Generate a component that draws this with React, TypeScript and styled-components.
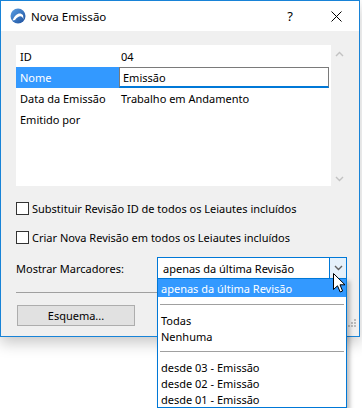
import React from 'react';
import styled, { createGlobalStyle } from 'styled-components';

const GlobalStyle = createGlobalStyle`
  html, body {
    margin: 0;
    padding: 0;
    background: #ffffff;
  }
  body {
    font-family: 'Noto Sans', 'Segoe UI', sans-serif;
    font-size: 11px;
    color: #000;
  }
  * { box-sizing: border-box; }
`;

const Stage = styled.div`
  position: relative;
  width: 362px;
  height: 408px;
  overflow: hidden;
`;

const Window = styled.div`
  width: 360px;
  border: 1px solid #1883d7;
  background: #f0f0f0;
  box-shadow: 0 6px 14px rgba(0, 0, 0, 0.22);
  display: flex;
  flex-direction: column;
`;

const TitleBar = styled.div`
  height: 30px;
  background: #fff;
  display: flex;
  align-items: center;
  padding-left: 9px;
`;

const TitleText = styled.span`
  margin-left: 5px;
  font-size: 11.5px;
  flex: 1;
`;

const TitleButton = styled.div<{ $w: number }>`
  width: ${p => p.$w}px;
  height: 30px;
  display: flex;
  align-items: center;
  justify-content: center;
  font-size: 13px;
`;

const Body = styled.div`
  padding: 14px 12px 10px 15px;
  display: flex;
  flex-direction: column;
`;

const ListPanel = styled.div`
  height: 141px;
  display: flex;
`;

const ListArea = styled.div`
  flex: 1;
  background: #fff;
  padding-top: 1px;
`;

const ScrollBar = styled.div`
  width: 16px;
  display: flex;
  flex-direction: column;
  justify-content: space-between;
  align-items: center;
  padding: 6px 0 4px;
`;

const Row = styled.div`
  height: 21px;
  display: flex;
  align-items: stretch;
`;

const Label = styled.div<{ $selected?: boolean }>`
  width: 103px;
  padding-left: 4px;
  display: flex;
  align-items: center;
  background: ${p => (p.$selected ? '#3399ff' : 'transparent')};
  color: ${p => (p.$selected ? '#fff' : '#000')};
`;

const Value = styled.div`
  flex: 1;
  padding-left: 2px;
  display: flex;
  align-items: center;
`;

const EditField = styled.div`
  flex: 1;
  margin-right: 2px;
  border: 1px solid #7a7a7a;
  border-bottom: 2px solid #0078d7;
  padding-left: 3px;
  display: flex;
  align-items: center;
  background: #fff;
`;

const CheckRow = styled.label<{ $top: number }>`
  display: flex;
  align-items: center;
  margin-top: ${p => p.$top}px;
  height: 14px;
`;

const Box = styled.span`
  width: 13px;
  height: 13px;
  border: 1px solid #333;
  background: #fff;
  margin-right: 3px;
`;

const ComboRow = styled.div`
  margin-top: 13px;
  display: flex;
  align-items: center;
  justify-content: space-between;
`;

const Combo = styled.div`
  position: relative;
  width: 190px;
  height: 22px;
  border: 1px solid #0078d7;
  background: #fff;
  display: flex;
`;

const ComboText = styled.div`
  flex: 1;
  padding-left: 5px;
  display: flex;
  align-items: center;
`;

const ComboArrow = styled.div`
  width: 17px;
  background: #e5f1fb;
  border-left: 1px solid #0078d7;
  display: flex;
  align-items: center;
  justify-content: center;
`;

const DropList = styled.div`
  position: absolute;
  left: -1px;
  top: 20px;
  width: 190px;
  background: #fff;
  border: 1px solid #0078d7;
  box-shadow: 3px 3px 4px rgba(0, 0, 0, 0.25);
  z-index: 5;
`;

const DropItem = styled.div<{ $selected?: boolean; $h: number }>`
  height: ${p => p.$h}px;
  padding-left: 3px;
  display: flex;
  align-items: center;
  background: ${p => (p.$selected ? '#3399ff' : 'transparent')};
  color: ${p => (p.$selected ? '#fff' : '#000')};
`;

const DropSep = styled.div`
  height: 15px;
  display: flex;
  align-items: center;
  padding: 0 2px;
  &::after {
    content: '';
    flex: 1;
    height: 1px;
    background: #a0a0a0;
  }
`;

const Separator = styled.div`
  margin-top: 13px;
  height: 1px;
  background: #a0a0a0;
`;

const PushButton = styled.button`
  margin-top: 12px;
  margin-left: 1px;
  width: 118px;
  height: 21px;
  border: 1px solid #adadad;
  background: #e1e1e1;
  font-family: inherit;
  font-size: 11px;
  padding: 0;
  color: #000;
`;

const Grip = styled.div`
  align-self: flex-end;
  margin-top: -10px;
  margin-right: -10px;
  height: 10px;
  width: 10px;
`;

const Cursor = styled.svg`
  position: absolute;
  left: 333px;
  top: 273px;
  z-index: 10;
`;

const AppIcon = () => (
  <svg width="16" height="16" viewBox="0 0 16 16">
    <defs>
      <linearGradient id="ag" x1="0" y1="0" x2="1" y2="1">
        <stop offset="0" stopColor="#5aa0e6" />
        <stop offset="1" stopColor="#1d4f9c" />
      </linearGradient>
    </defs>
    <circle cx="8" cy="8" r="7.5" fill="url(#ag)" />
    <path d="M2.5 12.5 C5 6 10 3.5 13 7 L13.6 11.5 C12.5 7.5 9 6.5 5 12 Z" fill="#fff" />
  </svg>
);

const Chevron = ({ up, color }: { up?: boolean; color: string }) => (
  <svg width="9" height="6" viewBox="0 0 9 6">
    <path d={up ? 'M1 5 L4.5 1.5 L8 5' : 'M1 1 L4.5 4.5 L8 1'} stroke={color} strokeWidth="1.4" fill="none" />
  </svg>
);

export default function App() {
  return (
    <Stage>
      <GlobalStyle />
      <Window>
        <TitleBar>
          <AppIcon />
          <TitleText>Nova Emissão</TitleText>
          <TitleButton $w={46}>?</TitleButton>
          <TitleButton $w={46}>
            <svg width="11" height="11" viewBox="0 0 11 11">
              <path d="M0.5 0.5 L10.5 10.5 M10.5 0.5 L0.5 10.5" stroke="#000" strokeWidth="1" />
            </svg>
          </TitleButton>
        </TitleBar>
        <Body>
          <ListPanel>
            <ListArea>
              <Row>
                <Label>ID</Label>
                <Value>04</Value>
              </Row>
              <Row>
                <Label $selected>Nome</Label>
                <EditField>Emissão</EditField>
              </Row>
              <Row>
                <Label>Data da Emissão</Label>
                <Value>Trabalho em Andamento</Value>
              </Row>
              <Row>
                <Label>Emitido por</Label>
                <Value />
              </Row>
            </ListArea>
            <ScrollBar>
              <Chevron up color="#c2c2c2" />
              <Chevron color="#c2c2c2" />
            </ScrollBar>
          </ListPanel>
          <CheckRow $top={15}>
            <Box />
            Substituir Revisão ID de todos os Leiautes incluídos
          </CheckRow>
          <CheckRow $top={15}>
            <Box />
            Criar Nova Revisão em todos os Leiautes incluídos
          </CheckRow>
          <ComboRow>
            <span>Mostrar Marcadores:</span>
            <Combo>
              <ComboText>apenas da última Revisão</ComboText>
              <ComboArrow>
                <Chevron color="#606060" />
              </ComboArrow>
              <DropList>
                <DropItem $selected $h={18}>apenas da última Revisão</DropItem>
                <DropSep />
                <DropItem $h={16}>Todas</DropItem>
                <DropItem $h={16}>Nenhuma</DropItem>
                <DropSep />
                <DropItem $h={16}>desde 03 - Emissão</DropItem>
                <DropItem $h={16}>desde 02 - Emissão</DropItem>
                <DropItem $h={16}>desde 01 - Emissão</DropItem>
              </DropList>
            </Combo>
          </ComboRow>
          <Separator />
          <PushButton>Esquema...</PushButton>
          <Grip>
            <svg width="10" height="10" viewBox="0 0 10 10">
              {[[7, 1], [4, 4], [7, 4], [1, 7], [4, 7], [7, 7]].map(([x, y], i) => (
                <rect key={i} x={x} y={y} width="2" height="2" fill="#bcbcbc" />
              ))}
            </svg>
          </Grip>
        </Body>
      </Window>
      <Cursor width="13" height="20" viewBox="0 0 13 20">
        <path d="M0.5 0.5 L0.5 16.5 L4.5 12.8 L7.2 19 L9.6 18 L7 11.8 L12 11.8 Z" fill="#fff" stroke="#000" strokeWidth="1" />
      </Cursor>
    </Stage>
  );
}
